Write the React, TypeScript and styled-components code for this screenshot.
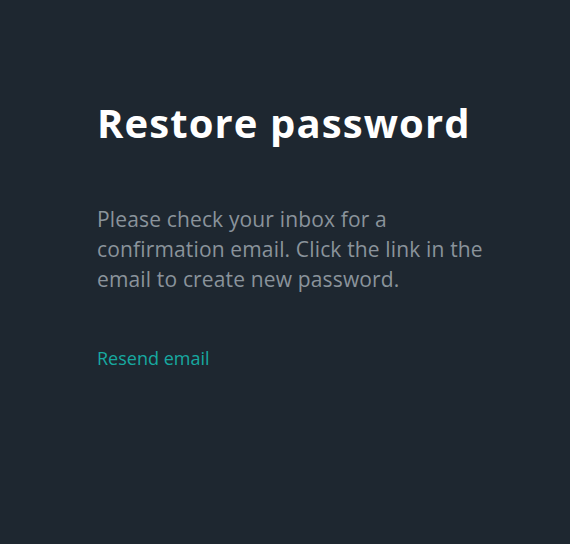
import React from "react";
import styled, { createGlobalStyle } from "styled-components";

const Global = createGlobalStyle`
  html, body { margin: 0; padding: 0; background: #1e2730; }
  body { font-family: "Open Sans", "Liberation Sans", sans-serif; }
`;

const Page = styled.div`
  width: 570px;
  height: 544px;
  background: #1e2730;
  box-sizing: border-box;
  padding: 98px 0 0 97px;
`;

const Panel = styled.div`
  width: 400px;
  display: flex;
  flex-direction: column;
`;

const Title = styled.h1`
  margin: 0;
  font-size: 40px;
  line-height: 50px;
  font-weight: 700;
  color: #ffffff;
  letter-spacing: 1.1px;
`;

const Text = styled.p`
  margin: 56px 0 0;
  font-size: 21px;
  line-height: 30px;
  letter-spacing: 0.15px;
  color: #8a939b;
`;

const Link = styled.a`
  margin-top: 52px;
  font-size: 18px;
  line-height: 24px;
  color: #17a9a0;
  text-decoration: none;
  cursor: pointer;
  align-self: flex-start;
`;

export default function App() {
  return (
    <>
      <Global />
      <Page>
        <Panel>
          <Title>Restore password</Title>
          <Text>
            Please check your inbox for a confirmation email. Click the link in
            the email to create new password.
          </Text>
          <Link>Resend email</Link>
        </Panel>
      </Page>
    </>
  );
}
